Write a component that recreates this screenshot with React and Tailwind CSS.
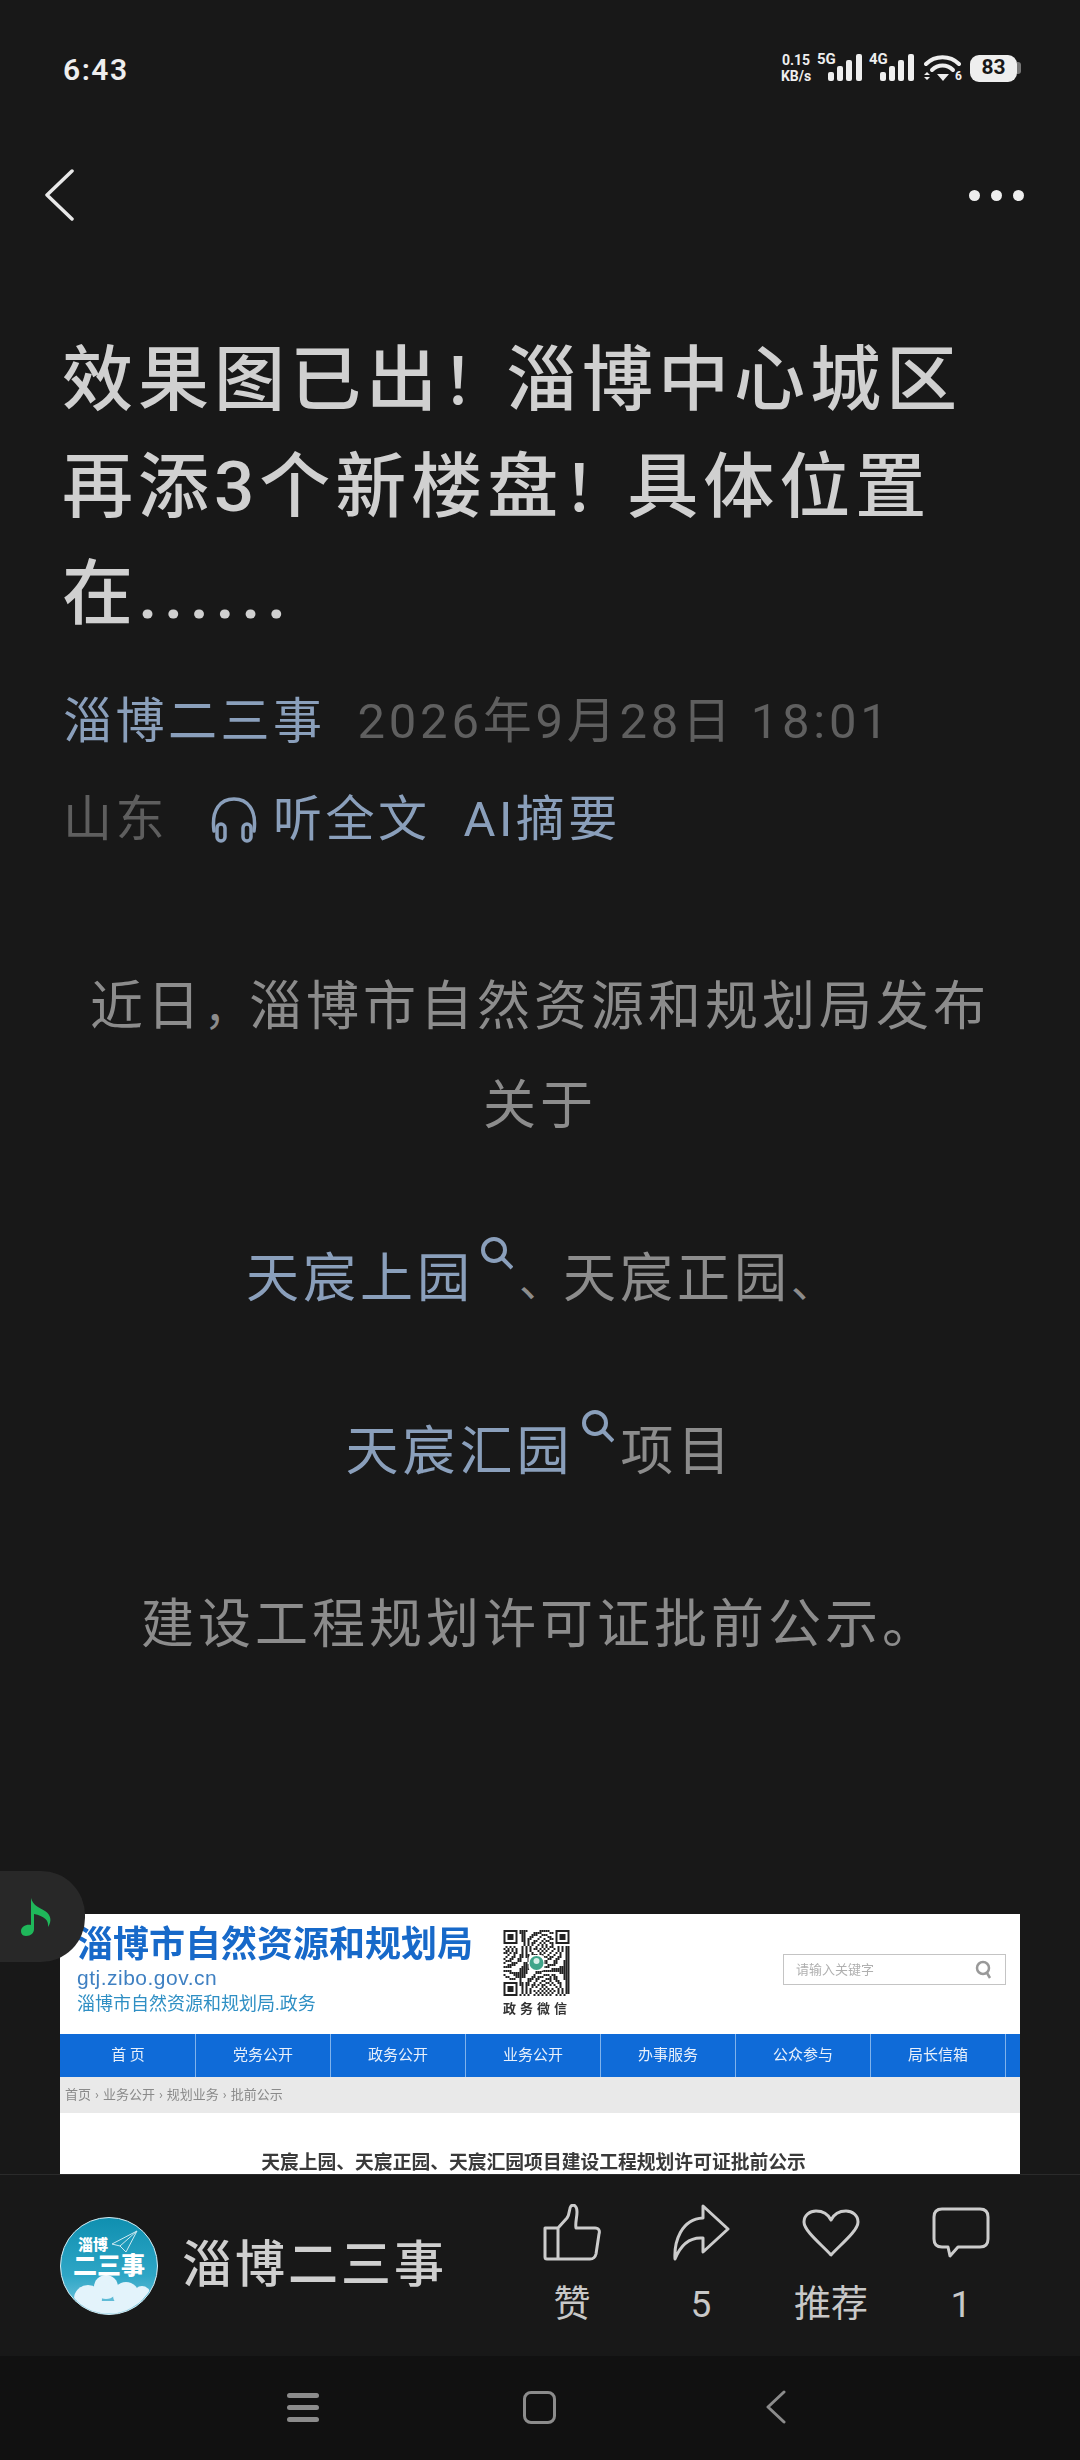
function Signal({ label }) {
  return (
    <div className="relative h-[30px] w-[46px]">
      <span className="absolute left-0 top-[-2px] text-[15px] font-bold leading-[16px] text-[#eeeeee]">{label}</span>
      <svg width="46" height="30" viewBox="0 0 46 30" className="block">
        <rect x="11" y="19" width="6" height="9" rx="2" fill="#eeeeee" />
        <rect x="20" y="13" width="6" height="15" rx="2" fill="#eeeeee" />
        <rect x="29" y="7" width="6" height="21" rx="2" fill="#eeeeee" />
        <rect x="39" y="1" width="6" height="27" rx="2" fill="#eeeeee" />
      </svg>
    </div>
  );
}

function Wifi() {
  return (
    <div className="relative h-[30px] w-[38px]">
      <svg width="38" height="30" viewBox="0 0 38 30" className="block" fill="none">
        <path d="M2 11 C11 2 26 2 35 11" stroke="#eeeeee" strokeWidth="4" strokeLinecap="round" />
        <path d="M8 17 C14 11 23 11 29 17" stroke="#eeeeee" strokeWidth="4" strokeLinecap="round" />
        <path d="M13 21 L25 21 L19 28 Z" fill="#eeeeee" />
        <path d="M3 19 L6 22 L0 22 Z M0 24 L6 24 L3 27 Z" fill="#eeeeee" />
      </svg>
      <span className="absolute right-0 top-[17px] text-[12px] font-bold leading-[13px] text-[#eeeeee]">6</span>
    </div>
  );
}

function StatusBar() {
  return (
    <div className="flex h-[136px] items-center justify-between pl-[63px] pr-[59px]">
      <span className="mt-[2px] text-[30px] font-semibold tracking-[1.500px] text-[#eeeeee]">6:43</span>
      <div className="flex items-center">
        <div className="mr-[5px] flex w-[32px] flex-col text-center text-[14px] font-bold leading-[16px] text-[#eeeeee]">
          <span>0.15</span>
          <span>KB/s</span>
        </div>
        <Signal label="5G" />
        <div className="w-[6px]" />
        <Signal label="4G" />
        <div className="w-[9px]" />
        <Wifi />
        <div className="w-[8px]" />
        <div className="flex items-center">
          <div className="flex h-[27px] w-[47px] items-center justify-center rounded-[9px] bg-[#eeeeee] text-[21px] font-bold text-[#181818]">83</div>
          <div className="h-[12px] w-[4px] rounded-r-[3px] bg-[#777777]" />
        </div>
      </div>
    </div>
  );
}

function TopNav() {
  return (
    <div className="flex h-[118px] items-center justify-between pl-[44px] pr-[56px]">
      <svg width="30" height="52" viewBox="0 0 30 52" fill="none">
        <path d="M28 2 L3 26 L28 50" stroke="#e8e8e8" strokeWidth="3.500" strokeLinecap="round" strokeLinejoin="round" />
      </svg>
      <div className="flex gap-[11px]">
        <div className="h-[11px] w-[11px] rounded-full bg-[#eeeeee]" />
        <div className="h-[11px] w-[11px] rounded-full bg-[#eeeeee]" />
        <div className="h-[11px] w-[11px] rounded-full bg-[#eeeeee]" />
      </div>
    </div>
  );
}

function Headphones() {
  return (
    <svg width="46" height="46" viewBox="0 0 46 46" fill="none" stroke="#8a9fbb" strokeWidth="3.500">
      <path d="M3 34 C0 12 10 2 23 2 C36 2 46 12 43 34" strokeLinecap="round" />
      <rect x="6" y="27" width="8" height="17" rx="4" />
      <rect x="32" y="27" width="8" height="17" rx="4" />
    </svg>
  );
}

function SearchMark({ className }) {
  return (
    <svg width="32" height="33" viewBox="0 0 32 33" fill="none" stroke="#8a9fbb" strokeWidth="4" className={"inline-block align-[27px] " + className}>
      <circle cx="13" cy="13" r="11" />
      <path d="M21 21 L31 31" />
    </svg>
  );
}

function Para({ children }) {
  return <p className="mb-[74px] text-center">{children}</p>;
}

function Article() {
  return (
    <>
      <h1 className="pl-[62px] pt-[72px] text-[71px] font-medium leading-[107px] tracking-[5px] whitespace-nowrap text-[#d0d0d0]">
        <span className="block">效果图已出<span className="text-[64px] leading-none tracking-normal">！</span>淄博中心城区</span>
        <span className="block">再添3个新楼盘<span className="text-[64px] leading-none tracking-normal">！</span>具体位置</span>
        <span className="block">在<span className="tracking-[6px]">......</span></span>
      </h1>
      <div className="mt-[26px] flex h-[98px] items-center px-[63px] text-[49px] tracking-[3.500px]">
        <span className="text-[#8a9fbb]">淄博二三事</span>
        <span className="ml-[32px] tracking-[3.750px] text-[#5f5f5f]">2026年9月28日 18:01</span>
      </div>
      <div className="flex h-[98px] items-center px-[63px] text-[49px] tracking-[3.500px] text-[#8a9fbb]">
        <span className="text-[#5e5e5e]">山东</span>
        <span className="ml-[43px] mr-[16px]"><Headphones /></span>
        <span>听全文</span>
        <span className="ml-[33px]">AI摘要</span>
      </div>
      <div className="mt-[89px] px-[70px] text-[53px] leading-[99px] tracking-[4px] text-[#8c8c8c]">
        <Para>近日<span className="text-[45px] leading-none tracking-normal">，</span>淄博市自然资源和规划局发布关于</Para>
        <Para>
          <span className="text-[#8a9fbb]">天宸上园</span>
          <SearchMark className="ml-[7px] mr-[6px]" />
          <span className="text-[44px] leading-none tracking-normal">、</span>天宸正园<span className="text-[43px] leading-none tracking-normal">、</span>
        </Para>
        <Para>
          <span className="text-[#8a9fbb]">天宸汇园</span>
          <SearchMark className="ml-[8px] mr-[7px]" />项目
        </Para>
        <Para>建设工程规划许可证批前公示。</Para>
      </div>
      <div className="mt-[239px] px-[60px]">
        <NoticeImage />
      </div>
    </>
  );
}

// fake QR pattern, stable between renders
function Qr() {
  const cells = [];
  const n = 33;
  const inFinder = (x, y) => (x < 8 && y < 8) || (x > n - 9 && y < 8) || (x < 8 && y > n - 9);
  for (let y = 0; y < n; y++) {
    for (let x = 0; x < n; x++) {
      if (inFinder(x, y)) continue;
      if (((x * 7 + y * 13 + x * y * 5 + (x ^ y) * 3) % 11) < 5) {
        cells.push(<rect key={x + "-" + y} x={x} y={y} width="1" height="1" />);
      }
    }
  }
  const finder = (x, y) => (
    <g key={x + "f" + y}>
      <rect x={x} y={y} width="7" height="7" />
      <rect x={x + 1} y={y + 1} width="5" height="5" fill="#ffffff" />
      <rect x={x + 2} y={y + 2} width="3" height="3" />
    </g>
  );
  return (
    <svg width="67" height="66" viewBox="0 0 33 33" fill="#222222" className="block">
      {cells}
      {finder(0, 0)}
      {finder(26, 0)}
      {finder(0, 26)}
      <rect x="12.500" y="12.500" width="8" height="8" rx="2" fill="#ffffff" />
      <circle cx="16.500" cy="16.500" r="3.500" fill="#3fa58a" />
      <circle cx="16.500" cy="15.500" r="1.500" fill="#d6efe8" />
    </svg>
  );
}

function NoticeImage() {
  const tabs = ["首 页", "党务公开", "政务公开", "业务公开", "办事服务", "公众参与", "局长信箱"];
  return (
    <div className="bg-white blur-[0.4px]">
      <div className="flex h-[120px] items-start">
        <div className="ml-[17px] w-[426px] pt-[10px]">
          <div className="text-[36px] font-bold leading-[42px] whitespace-nowrap text-[#1769c9]">淄博市自然资源和规划局</div>
          <div className="font-['Liberation_Sans',sans-serif] text-[21px] leading-[24px] tracking-[0.5px] text-[#3f80c2]">gtj.zibo.gov.cn</div>
          <div className="mt-[2px] text-[18px] leading-[24px] whitespace-nowrap text-[#2f8fc4]">淄博市自然资源和规划局.政务</div>
        </div>
        <div className="pt-[16px]">
          <Qr />
          <div className="mt-[5px] text-[13px] font-bold leading-[16px] tracking-[4px] whitespace-nowrap text-[#333333]">政务微信</div>
        </div>
        <div className="ml-[212px] mt-[40px] flex h-[31px] w-[223px] items-center justify-between border border-[#c4c4c4] pl-[12px] pr-[12px]">
          <span className="text-[13px] text-[#b0b0b0]">请输入关键字</span>
          <svg width="18" height="20" viewBox="0 0 18 20" fill="none" stroke="#999999" strokeWidth="2.500">
            <circle cx="8" cy="8" r="6" />
            <path d="M12 13 L15 18" />
          </svg>
        </div>
      </div>
      <div className="flex h-[43px] bg-[#0f6bd8] pl-px">
        {tabs.map((t) => (
          <div key={t} className="flex w-[135px] items-center justify-center border-r border-[#7fb2ec] text-[15px] text-[#e8f0fb]">{t}</div>
        ))}
      </div>
      <div className="flex h-[36px] items-center gap-[4px] bg-[#e9e9e9] pl-[5px] text-[13px] text-[#8a8a8a]">
        <span>首页</span><span>›</span><span>业务公开</span><span>›</span><span>规划业务</span><span>›</span><span>批前公示</span>
      </div>
      <div className="pr-[13px] pt-[38px] text-center text-[18.800px] font-bold leading-[24px] whitespace-nowrap text-[#3a3a3a]">
        天宸上园、天宸正园、天宸汇园项目建设工程规划许可证批前公示
      </div>
    </div>
  );
}

function MusicButton() {
  return (
    <div className="absolute left-0 top-[1871px] flex h-[91px] w-[85px] items-center rounded-r-[44px] bg-[#282828] pl-[21px]">
      <svg width="31" height="38" viewBox="0 0 31 38">
        <path d="M10 0 C12 7 17 9 24 13 C30 17 31 23 27 29 C28 22 23 18 13 16 L13 31 C13 35 10 38 5 38 C1 38 0 35 0 33 C0 29 5 26 10 27 Z" fill="#1fb75a" />
      </svg>
    </div>
  );
}

function Avatar() {
  return (
    <svg width="98" height="98" viewBox="0 0 98 98" className="shrink-0">
      <defs>
        <linearGradient id="sky" x1="0" y1="0" x2="0" y2="1">
          <stop offset="0" stopColor="#0f8fb0" />
          <stop offset="0.6" stopColor="#2ea6c6" />
          <stop offset="1" stopColor="#7cc8e0" />
        </linearGradient>
        <clipPath id="disc"><circle cx="49" cy="49" r="47.500" /></clipPath>
      </defs>
      <circle cx="49" cy="49" r="48.500" fill="url(#sky)" stroke="#d6edf4" strokeWidth="1" />
      <g clipPath="url(#disc)" fill="#e3f3fb">
        <circle cx="46" cy="70" r="12" />
        <circle cx="28" cy="82" r="14" />
        <circle cx="66" cy="78" r="13" />
        <circle cx="82" cy="78" r="9" />
        <rect x="10" y="84" width="80" height="16" />
      </g>
      <text x="18" y="33" fontSize="15" fontWeight="900" fill="#ffffff">淄博</text>
      <text x="13" y="57" fontSize="24" fontWeight="900" fill="#ffffff">二三事</text>
      <path d="M52 27 L77 14 L66 35 L60 29 Z M60 29 L77 14" fill="none" stroke="#cfeaf2" strokeWidth="1" />
    </svg>
  );
}

function Action({ icon, label, className }) {
  return (
    <div className={"flex w-[100px] flex-col items-center " + className}>
      <div className="flex h-[68px] items-center justify-center">{icon}</div>
      <span className="mt-[16px] text-[37px] leading-[44px] text-[#c8c8c8]">{label}</span>
    </div>
  );
}

function BottomBar() {
  const stroke = { fill: "none", stroke: "#cccccc", strokeWidth: 3, strokeLinejoin: "round" };
  return (
    <div className="flex h-[182px] shrink-0 items-center border-t border-[#2b2b2b] bg-[#181818] pl-[60px]">
      <Avatar />
      <span className="ml-[24px] w-[300px] text-[50px] font-medium tracking-[3px] whitespace-nowrap text-[#cfcfcf]">淄博二三事</span>
      <div className="ml-[40px] flex pb-[6px]">
        <Action label="赞" className="" icon={
          <svg width="58" height="57" viewBox="0 0 58 57" {...stroke}>
            <path d="M15 24 L24 14 C27 10 26 4 28 2 C31 0 34 2 34 8 C34 14 32 19 33 24 L52 24 C56 24 57 27 56 30 L53 50 C52 54 50 55 47 55 L4 55 Q2 55 2 53 L2 24 Z M15 24 V55" />
          </svg>
        } />
        <Action label="5" className="ml-[29px]" icon={
          <svg width="57" height="57" viewBox="0 0 57 57" {...stroke}>
            <path d="M30 2 L55 25 L30 48 L30 34 C18 33 8 40 2 55 C1 38 8 15 30 14 Z" />
          </svg>
        } />
        <Action label="推荐" className="ml-[30px]" icon={
          <svg width="58" height="48" viewBox="0 0 58 48" {...stroke}>
            <path d="M29 46 C20 36 2 22 2 13 C2 6 8 2 14 2 C20 2 26 5 29 11 C32 5 38 2 44 2 C50 2 56 6 56 13 C56 22 38 36 29 46 Z" />
          </svg>
        } />
        <Action label="1" className="ml-[30px]" icon={
          <svg width="58" height="51" viewBox="0 0 58 51" {...stroke}>
            <path d="M10 2 H48 Q56 2 56 10 V32 Q56 40 48 40 H26 L18 49 L16 40 H10 Q2 40 2 32 V10 Q2 2 10 2 Z" />
          </svg>
        } />
      </div>
    </div>
  );
}

function SystemNav() {
  return (
    <div className="flex h-[104px] shrink-0 items-center bg-[#111111] pb-[2px] pl-[287px]">
      <div className="flex w-[32px] flex-col gap-[7px]">
        <div className="h-[5px] rounded-full bg-[#8c8c8c]" />
        <div className="h-[5px] rounded-full bg-[#8c8c8c]" />
        <div className="h-[5px] rounded-full bg-[#8c8c8c]" />
      </div>
      <div className="ml-[204px] h-[33px] w-[33px] rounded-[8px] border-[3px] border-[#8c8c8c]" />
      <svg width="24" height="34" viewBox="0 0 24 34" fill="none" className="ml-[208px]">
        <path d="M20 2 L4 17 L20 32" stroke="#8c8c8c" strokeWidth="3" strokeLinecap="round" strokeLinejoin="round" />
      </svg>
    </div>
  );
}

export default function App() {
  return (
    <div className="relative flex h-[2460px] w-[1080px] flex-col overflow-hidden bg-[#181818] font-['Roboto','Noto_Sans_CJK_SC',sans-serif]">
      <StatusBar />
      <TopNav />
      <div className="min-h-0 flex-1 overflow-hidden">
        <Article />
      </div>
      <MusicButton />
      <BottomBar />
      <SystemNav />
    </div>
  );
}
